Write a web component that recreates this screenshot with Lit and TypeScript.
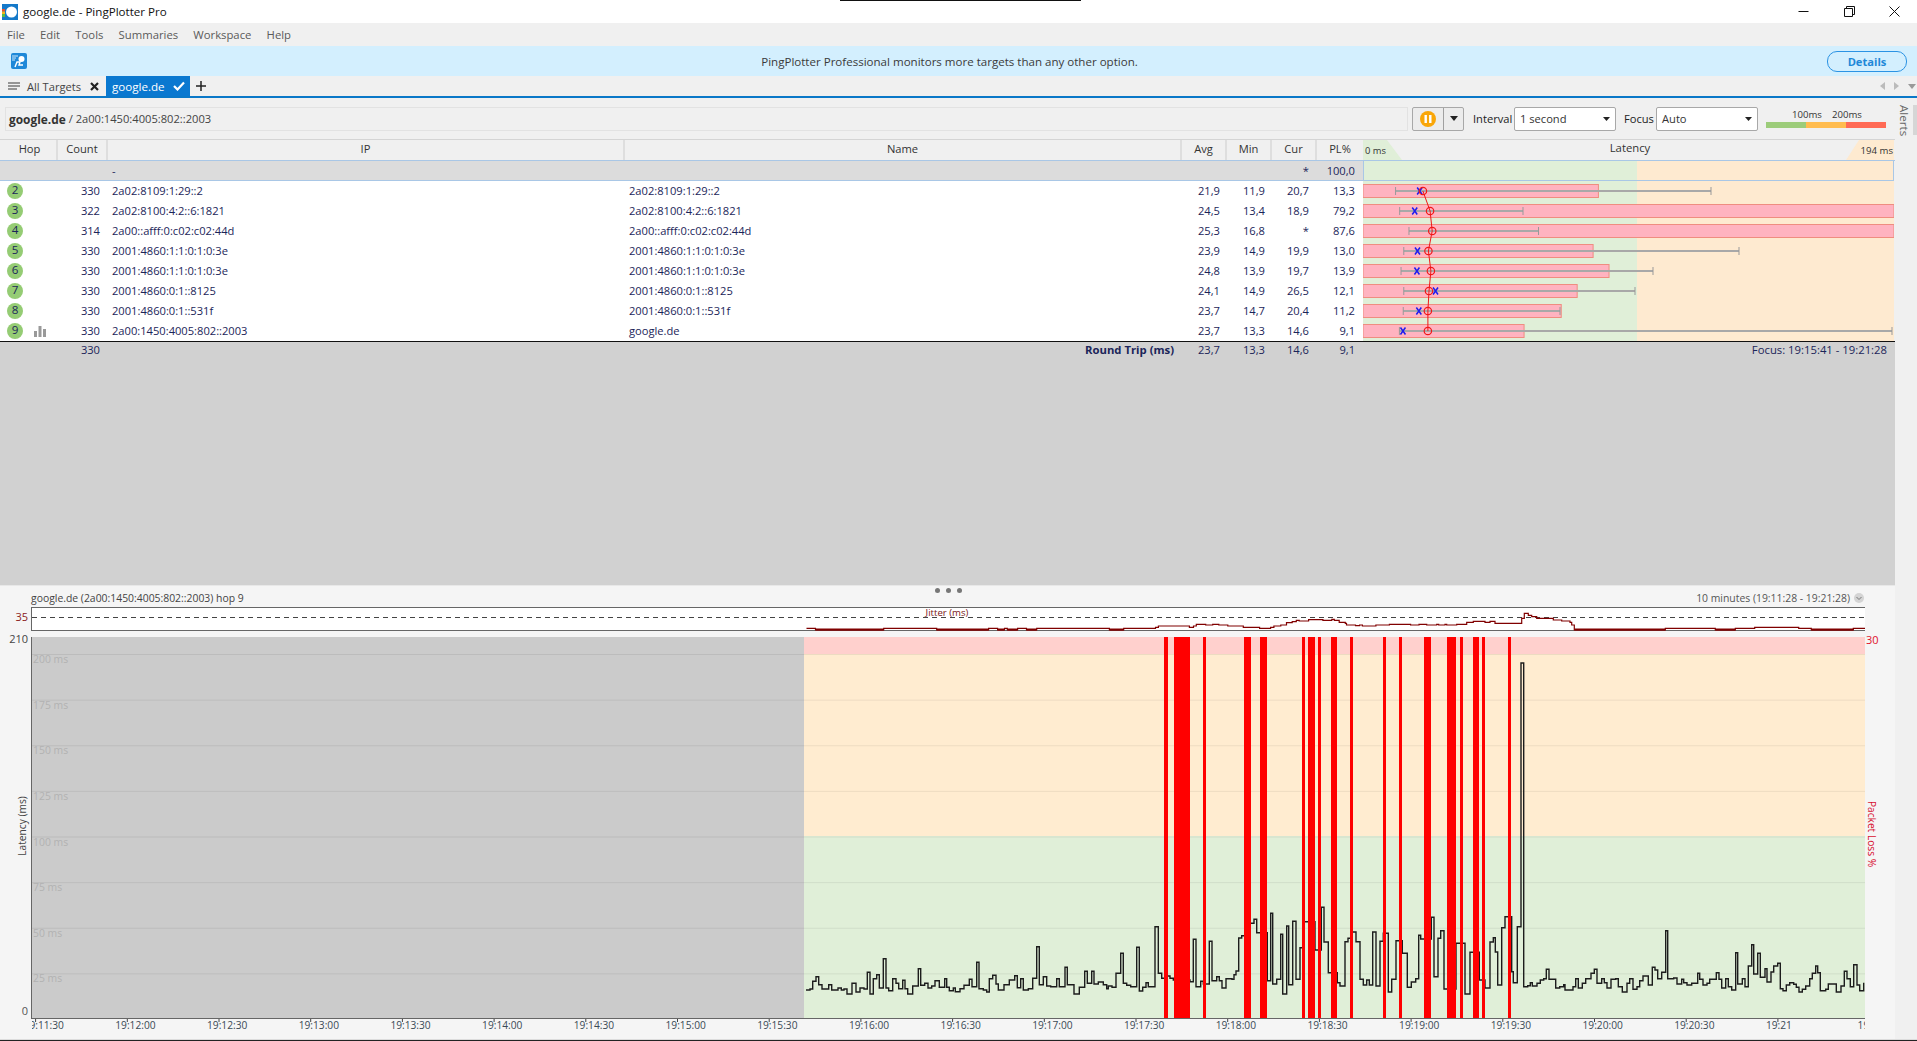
import { LitElement, html, css, svg } from "lit";
import { customElement } from "lit/decorators.js";

type Pt = [number, number];
const K = 531 / 194;
const X = (ms: number) => 1363 + ms * K;

const ROWS = [
  { hop: 2, count: 330, ip: "2a02:8109:1:29::2", name: "2a02:8109:1:29::2", avg: 21.9, min: 11.9, cur: 20.7, pl: 13.3, maxX: 1711 },
  { hop: 3, count: 322, ip: "2a02:8100:4:2::6:1821", name: "2a02:8100:4:2::6:1821", avg: 24.5, min: 13.4, cur: 18.9, pl: 79.2, maxX: 1523 },
  { hop: 4, count: 314, ip: "2a00::afff:0:c02:c02:44d", name: "2a00::afff:0:c02:c02:44d", avg: 25.3, min: 16.8, cur: null, pl: 87.6, maxX: 1538.5 },
  { hop: 5, count: 330, ip: "2001:4860:1:1:0:1:0:3e", name: "2001:4860:1:1:0:1:0:3e", avg: 23.9, min: 14.9, cur: 19.9, pl: 13.0, maxX: 1739 },
  { hop: 6, count: 330, ip: "2001:4860:1:1:0:1:0:3e", name: "2001:4860:1:1:0:1:0:3e", avg: 24.8, min: 13.9, cur: 19.7, pl: 13.9, maxX: 1653 },
  { hop: 7, count: 330, ip: "2001:4860:0:1::8125", name: "2001:4860:0:1::8125", avg: 24.1, min: 14.9, cur: 26.5, pl: 12.1, maxX: 1635 },
  { hop: 8, count: 330, ip: "2001:4860:0:1::531f", name: "2001:4860:0:1::531f", avg: 23.7, min: 14.7, cur: 20.4, pl: 11.2, maxX: 1560 },
  { hop: 9, count: 330, ip: "2a00:1450:4005:802::2003", name: "google.de", avg: 23.7, min: 13.3, cur: 14.6, pl: 9.1, maxX: 1892 },
];
const f1 = (n: number) => n.toFixed(1).replace(".", ",");

const L8: Pt[] = [[78,300],[90,297],[98,274],[108,260],[116,284],[126,297],[136,297],[146,284],[155,300],[174,294],[184,300],[192,297],[201,312],[216,280],[228,306],[240,294],[252,297],[262,247],[270,312],[280,266],[290,254],[298,294],[310,206],[318,294],[326,302],[338,266],[348,280],[356,296],[368,271],[375,296],[383,312],[398,288],[415,236],[422,286],[434,280],[444,294],[455,288],[465,272],[478,292],[494,266],[500,292],[508,302],[520,294],[526,305],[540,296],[552,286],[568,268],[576,290],[590,217],[597,296],[610,300],[620,306],[628,266],[638,256],[648,282],[655,300],[672,284],[688,270],[704,257],[712,293],[722,266],[730,300],[745,296],[758,265],[770,170],[778,284],[790,260],[800,288],[812,290],[830,266],[838,290],[855,232],[862,284],[882,312],[898,292],[914,244],[922,280],[935,244],[942,282],[955,276],[970,284],[980,296],[985,288],[996,292],[1008,250],[1022,190],[1030,280],[1040,286],[1052,290],[1070,172],[1078,303],[1088,292],[1098,278],[1105,290],[1125,110],[1135,250],[1145,265],[1158,258]];
const L9: Pt[] = [[44,258],[60,265],[70,270],[120,275],[130,148],[138,290],[152,274],[160,282],[178,154],[186,272],[200,260],[208,272],[216,294],[228,266],[246,268],[252,254],[258,243],[266,144],[275,137],[290,100],[312,88],[320,128],[352,272],[362,70],[368,282],[380,268],[392,133],[398,312],[410,108],[416,284],[428,94],[438,268],[450,173],[462,95],[495,180],[514,52],[522,156],[535,248],[562,278],[570,288],[585,155],[594,145],[604,126],[618,155],[630,268],[640,285],[650,270],[658,285],[668,126],[678,288],[690,154],[700,130],[715,306],[725,268],[738,152],[757,190],[772,292],[784,276],[797,266],[806,136],[812,147],[844,82],[852,260],[864,145],[872,122],[882,297],[918,160],[945,312],[960,187],[988,270],[1005,294],[1020,156],[1030,143],[1036,186],[1043,285],[1055,113],[1065,80],[1085,245],[1090,278],[1102,110],[1113,-681]];
const L10: Pt[] = [[20,290],[32,287],[40,278],[46,288],[60,280],[70,270],[80,266],[88,238],[96,268],[116,294],[128,290],[140,284],[144,300],[168,290],[176,266],[184,294],[196,280],[206,266],[222,250],[232,238],[240,280],[254,266],[262,278],[270,294],[282,268],[296,266],[304,290],[316,306],[330,280],[338,266],[348,298],[360,290],[368,272],[378,258],[394,285],[406,232],[414,240],[422,266],[434,247],[446,122],[452,266],[470,264],[480,282],[494,268],[500,278],[510,285],[524,280],[542,250],[548,268],[558,285],[570,280],[578,268],[598,248],[606,268],[614,294],[626,266],[634,290],[644,300],[656,188],[662,282],[676,266],[684,290],[694,228],[704,164],[710,252],[722,190],[730,262],[744,236],[750,276],[762,246],[770,228],[782,220],[790,296],[798,302],[808,285],[818,278],[830,283],[838,292],[846,306],[856,298],[866,288],[878,266],[886,250],[896,228],[902,248],[910,302],[926,298],[934,282],[958,306],[972,288],[982,244],[990,266],[1000,290],[1010,224],[1020,285],[1028,302],[1040,278]];

const latencyPts: Pt[] = [
  ...L8.map(([x, y]): Pt => [780 + x / 3, 890 + y / 3]),
  ...L9.map(([x, y]): Pt => [1150 + x / 3, 890 + y / 3]),
  ...L10.map(([x, y]): Pt => [1517 + x / 3, 890 + y / 3]),
];

const J6: Pt[] = [[65,115],[87,120],[254,115],[384,120],[511,115],[533,120],[550,115],[557,120],[582,115],[604,120],[629,115],[807,120],[842,115],[920,112],[927,108],[1003,112],[1013,108],[1020,103],[1043,105],[1060,103],[1075,105],[1097,108],[1135,112],[1175,115],[1202,112],[1210,108],[1227,105],[1241,98],[1255,95],[1265,91],[1272,93],[1288,93],[1295,89],[1330,91],[1352,88],[1358,91],[1370,97],[1385,100],[1388,105],[1410,107],[1420,105],[1427,108],[1460,105],[1493,103],[1545,105]];
const J7: Pt[] = [[33,105],[57,103],[80,105],[110,103],[116,105],[135,103],[140,105],[170,103],[200,97],[220,94],[250,94],[255,97],[270,94],[285,100],[340,100],[365,85],[373,70],[385,76],[395,80],[410,85],[440,85],[460,90],[485,93],[510,97],[515,105],[523,120],[796,115],[946,120],[1006,115],[1064,112],[1196,115],[1234,120],[1360,115],[1395,115]];
const jitterPts: Pt[] = [
  ...J6.map(([x, y]): Pt => [780 + x / 2.45, 590 + y / 3]),
  ...J7.map(([x, y]): Pt => [1400 + x / 3, 590 + y / 3]),
];

const stepPath = (p: Pt[]) => {
  let d = `M${p[0][0].toFixed(1)} ${p[0][1].toFixed(1)}`;
  for (let i = 1; i < p.length; i++) d += `H${p[i][0].toFixed(1)}V${p[i][1].toFixed(1)}`;
  return d;
};

const RED: [number, number][] = [[1164,1168],[1174,1190],[1203,1206],[1244,1251],[1260,1267],[1302,1305],[1308,1315],[1318,1321],[1331,1337],[1350,1353],[1383,1386],[1399,1402],[1424,1431],[1447,1456],[1460,1463],[1473,1479],[1482,1485],[1508,1511]];
const TIMES = ["19:11:30","19:12:00","19:12:30","19:13:00","19:13:30","19:14:00","19:14:30","19:15:00","19:15:30","19:16:00","19:16:30","19:17:00","19:17:30","19:18:00","19:18:30","19:19:00","19:19:30","19:20:00","19:20:30","19:21","19:21:30"];
const GRID = [200, 175, 150, 125, 100, 75, 50, 25];
const gy = (ms: number) => 1019 - ms * 1.825;

@customElement("app-root")
export class AppRoot extends LitElement {
  static styles = css`
    :host { display: block; width: 1917px; height: 1041px; overflow: hidden; position: relative; background: #f0f0f0; font-family: "Open Sans", "Noto Sans", sans-serif; font-size: 11.15px; color: #333; }
    * { box-sizing: border-box; }
    svg { display: block; }
    svg text { font-family: "Open Sans", "Noto Sans", sans-serif; }
    .page { display: flex; flex-direction: column; height: 1041px; }
    .topline { position: absolute; left: 840px; top: 0; width: 241px; height: 1px; background: #111; }
    .title { height: 23px; background: #fff; display: flex; align-items: center; padding-left: 2px; color: #111; font-size: 11.6px; flex: none; }
    .title .txt { margin-left: 5px; }
    .winbtns { margin-left: auto; display: flex; gap: 34.5px; padding-right: 17px; }
    .menu { height: 23px; flex: none; display: flex; align-items: center; padding-left: 7px; gap: 15.2px; color: #5a5a5a; font-size: 11.3px; }
    .banner { height: 30px; flex: none; background: #d3effe; display: flex; align-items: center; padding: 0 10px 0 11px; }
    .banner .msg { flex: 1; text-align: center; color: #3a3a3a; padding-left: 45px; font-size: 11.55px; }
    .details { width: 80px; height: 21px; border: 1.5px solid #2b93e4; border-radius: 10px; display: flex; align-items: center; justify-content: center; font-weight: 700; color: #1e88d8; }
    .tabs { height: 20px; flex: none; display: flex; align-items: center; padding-left: 8px; }
    .tabs .all { margin-left: 7px; color: #444; width: 63px; }
    .tab { margin-left: 7px; width: 84px; height: 20px; background: #0a78d0; color: #fff; display: flex; align-items: center; padding-left: 6px; gap: 7px; font-size: 11.6px; }
    .tab span { width: 54px; }
    .plus { margin-left: 6px; }
    .navs { margin-left: auto; display: flex; gap: 9px; align-items: center; padding-right: 1px; }
    .blue { height: 2px; flex: none; background: #0a78c8; }
    .body { flex: 1; display: flex; min-height: 0; }
    .foot { height: 2px; flex: none; background: #dcdcdc; border-bottom: 1px solid #222; }
    .main { width: 1895px; flex: none; display: flex; flex-direction: column; }
    .alerts { flex: 1; display: flex; padding-top: 7px; padding-left: 2px; }
    .alerts .lbl { writing-mode: vertical-rl; color: #666; height: 30px; line-height: 15px; font-size: 11.6px; }
    .alerts .thumb { width: 4px; height: 30px; background: #d6d6d6; margin-left: auto; }
    .toolbar { height: 42px; flex: none; display: flex; align-items: center; padding-left: 5px; color: #222; border-bottom: 1px solid #d4d4d4; }
    .crumb { width: 1403px; height: 24px; border: 1px solid #e2e2e2; display: flex; align-items: center; padding-left: 3px; color: #444; white-space: pre; }
    .crumb b { color: #333; font-size: 11.9px; }
    .pause { margin-left: 4px; width: 52px; height: 24px; border: 1px solid #a8a8a8; border-radius: 2px; display: flex; background: #ececec; }
    .pause .p1 { width: 31px; display: flex; align-items: center; justify-content: center; border-right: 1px solid #a0a0a0; }
    .pause .p2 { flex: 1; display: flex; align-items: center; justify-content: center; }
    .lab { margin-left: 9px; width: 41px; }
    .lab.f { margin-left: 8px; width: 32px; }
    .sel { width: 102px; height: 24px; background: #fff; border: 1px solid #a8a8a8; border-radius: 2px; display: flex; align-items: center; justify-content: space-between; padding: 0 5px; color: #333; }
    .legend { margin-left: 8px; width: 121px; display: flex; flex-direction: column; }
    .legend .nums { display: flex; font-size: 9.6px; padding-left: 26px; gap: 10px; line-height: 12px; color: #333; }
    .legend .bar { display: flex; height: 6px; margin-top: 1px; }
    .legend .bar i { display: block; }
    .g1 { width: 40px; background: #9ccc7a; } .g2 { width: 40px; background: #ffbc4f; } .g3 { width: 40px; background: #ff6a55; }
    .cols { display: grid; grid-template-columns: 58px 50px 517px 557px 45px 45px 45px 46px; }
    .head { height: 21px; flex: none; display: flex; border-bottom: 1px solid #a9c7e6; }
    .head .cols { width: 1363px; }
    .head .cols div { text-align: center; line-height: 17px; color: #333; border-right: 2px solid #dedede; }
    .head .cols div:first-child { padding-left: 3px; }
    .head .cols div:last-child { border-right: 0; }
    .tbl { display: flex; flex: none; }
    .rowsbox { width: 1363px; }
    .r { height: 20px; line-height: 19px; background: #fff; color: #1b2559; white-space: nowrap; }
    .r.none { background: #dcdcdc; box-shadow: inset 0 -1px 0 #a9c7e6; }
    .r > div { padding: 0 8px 0 4px; overflow: hidden; }
    .hopc { display: flex; align-items: center; gap: 11px; padding-left: 7px !important; }
    .dot { width: 16px; height: 16px; border-radius: 50%; background: #95cc74; text-align: center; line-height: 14px; color: #1b2559; flex: none; font-size: 11.6px; }
    .num { text-align: right; }
    .n7 { padding-right: 7px !important; }
    .sum { flex: 1; background: #d1d1d1; border-top: 1.5px solid #111; min-height: 0; }
    .sum .r { background: transparent; height: 18px; line-height: 15px; }
    .sum .cols { width: 1894px; grid-template-columns: 58px 50px 517px 557px 45px 45px 45px 46px 531px; }
    .rt { font-weight: 700; text-align: right; padding-right: 8px !important; font-size: 11.3px; }
    .focus { text-align: right; padding-right: 7px !important; font-size: 11.3px; }
    .panel { height: 454px; flex: none; background: #f5f5f5; position: relative; border-top: 1px solid #e8e8e8; }
    .dots { position: absolute; left: 935px; top: 2px; display: flex; gap: 6px; }
    .dots i { width: 5px; height: 5px; border-radius: 50%; background: #777; display: block; }
    .phead { height: 21px; display: flex; align-items: center; padding: 3px 31px 0 31px; color: #444; font-size: 10.4px; }
    .phead .rng { margin-left: auto; color: #555; }
    .chev { margin-left: 4px; }
  `;

  private rowCols(r: (typeof ROWS)[number]) {
    return html`<div class="cols r">
      <div class="hopc"><span class="dot">${r.hop}</span>${r.hop === 9
        ? html`<svg width="12" height="11" viewBox="0 0 12 11"><path d="M0 5h3v6H0zM4.5 0h3v11h-3zM9 3h3v8H9z" fill="#999"/></svg>`
        : ""}</div>
      <div class="num">${r.count}</div>
      <div>${r.ip}</div>
      <div>${r.name}</div>
      <div class="num n7">${f1(r.avg)}</div>
      <div class="num n7">${f1(r.min)}</div>
      <div class="num">${r.cur === null ? "*" : f1(r.cur)}</div>
      <div class="num">${f1(r.pl)}</div>
    </div>`;
  }

  private latencyBars() {
    const rowY = (i: number) => 191 + i * 20;
    const avgLine = ROWS.map((r, i) => `${X(r.avg).toFixed(1)},${rowY(i)}`).join(" ");
    return html`<svg width="531" height="180" viewBox="1363 161 531 180">
      <rect x="1363" y="161" width="274" height="180" fill="#e0efd8"/>
      <rect x="1637" y="161" width="257" height="180" fill="#feead0"/>
      <rect x="1363.5" y="160.5" width="530" height="20" fill="none" stroke="#a9c7e6"/>
      ${ROWS.map((r, i) => {
        const y = rowY(i);
        const w = Math.min(531, (r.pl / 30) * 531);
        return svg`
          <rect x="1363" y=${y - 6.5} width=${w} height="13" fill="#ffb3c0" stroke="#ef8d80" stroke-width="1"/>
          <line x1=${X(r.min)} x2=${r.maxX} y1=${y} y2=${y} stroke="#a8a8a8" stroke-width="2"/>
          <line x1=${X(r.min)} x2=${X(r.min)} y1=${y - 4} y2=${y + 4} stroke="#999" stroke-width="1"/>
          <line x1=${r.maxX} x2=${r.maxX} y1=${y - 4} y2=${y + 4} stroke="#999" stroke-width="1"/>`;
      })}
      <polyline points=${avgLine} fill="none" stroke="#f01818" stroke-width="1"/>
      ${ROWS.map((r, i) => {
        const y = rowY(i);
        const cx = r.cur === null ? null : X(r.cur);
        return svg`
          ${cx === null ? "" : svg`<path d="M${cx - 2.5} ${y - 3.5}L${cx + 2.5} ${y + 3.5}M${cx + 2.5} ${y - 3.5}L${cx - 2.5} ${y + 3.5}" stroke="#1c1cf0" stroke-width="1.5" fill="none"/>`}
          <circle cx=${X(r.avg)} cy=${y} r="3.7" fill="none" stroke="#f01818" stroke-width="1.2"/>`;
      })}
    </svg>`;
  }

  private chart() {
    return html`<svg width="1895" height="432" viewBox="0 607 1895 432">
      <defs>
        <clipPath id="xc"><rect x="32" y="1019" width="1833" height="20"/></clipPath>
        <clipPath id="pc"><rect x="32" y="637" width="1833" height="381"/></clipPath>
      </defs>
      <rect x="32" y="607" width="1833" height="24" fill="#fff"/>
      <line x1="32" x2="1865" y1="607.5" y2="607.5" stroke="#666"/>
      <line x1="32" x2="1865" y1="630.5" y2="630.5" stroke="#666"/>
      <line x1="31.5" x2="31.5" y1="607" y2="631" stroke="#666"/>
      <line x1="32" x2="1865" y1="617.5" y2="617.5" stroke="#444" stroke-dasharray="5 4"/>
      <text x="28" y="621" text-anchor="end" font-size="11" fill="#8b1a1a">35</text>
      <text x="947" y="615.5" text-anchor="middle" font-size="9.6" fill="#7a1515">Jitter (ms)</text>
      <path d=${stepPath(jitterPts)} fill="none" stroke="#800000" stroke-width="1.2"/>
      ${jitterPts.map((p, i) =>
        p[1] >= 629.9 && jitterPts[i + 1]
          ? svg`<line x1=${p[0]} x2=${jitterPts[i + 1][0]} y1=${p[1] - 0.5} y2=${p[1] - 0.5} stroke="#800000" stroke-width="2"/>`
          : "")}

      <rect x="32" y="637" width="772" height="381" fill="#cbcbcb"/>
      <rect x="804" y="637" width="1061" height="17" fill="#ffd0cd"/>
      <rect x="804" y="654" width="1061" height="182" fill="#ffecd0"/>
      <rect x="804" y="836" width="1061" height="182" fill="#e0efd8"/>
      ${GRID.map((ms) => svg`
        <line x1="32" x2="1865" y1=${gy(ms) + 0.5} y2=${gy(ms) + 0.5} stroke="#000" stroke-opacity="0.07"/>
        <text x="33" y=${gy(ms) + 9} font-size="10.4" fill="#b2b2b2">${ms} ms</text>`)}
      <g clip-path="url(#pc)">
        <path d=${stepPath(latencyPts)} fill="none" stroke="#1c1c1c" stroke-width="1.4"/>
        ${RED.map(([a, b]) => svg`<rect x=${a} y="637" width=${b - a} height="381" fill="#ff0000"/>`)}
      </g>
      <line x1="31.5" x2="31.5" y1="637" y2="1019" stroke="#666"/>
      <line x1="32" x2="1865" y1="1018.5" y2="1018.5" stroke="#666"/>
      <text x="28" y="643" text-anchor="end" font-size="11" fill="#444">210</text>
      <text x="28" y="1015" text-anchor="end" font-size="11" fill="#555">0</text>
      <text x="1866" y="644" font-size="11" fill="#e0102a">30</text>
      <text transform="translate(26 826) rotate(-90)" text-anchor="middle" font-size="10.2" fill="#444">Latency (ms)</text>
      <text transform="translate(1868 834) rotate(90)" text-anchor="middle" font-size="10.2" fill="#d81030">Packet Loss %</text>
      <g clip-path="url(#xc)">
        ${TIMES.map((t, i) => {
          const tx = 35.6 + i * 91.7;
          return svg`<line x1=${tx} x2=${tx} y1="1019" y2="1022" stroke="#444"/>
          <text x=${tx - 12} y="1029" font-size="10.2" fill="#3a4a55">${t}</text>`;
        })}
      </g>
    </svg>`;
  }

  render() {
    return html`<div class="page">
      <div class="title">
        <svg width="16" height="16" viewBox="0 0 16 16">
          <rect width="16" height="16" fill="#1479c9"/>
          <circle cx="9.5" cy="8" r="5.5" fill="#fff"/>
          <rect y="5" width="3" height="2.5" fill="#e8502a"/><rect y="7.5" width="3" height="2.5" fill="#f5b21a"/><rect y="10" width="3" height="3" fill="#58b947"/>
        </svg>
        <span class="txt">google.de - PingPlotter Pro</span>
        <div class="winbtns">
          <svg width="11" height="11" viewBox="0 0 11 11"><path d="M0.5 5.5h10" stroke="#111" fill="none"/></svg>
          <svg width="11" height="11" viewBox="0 0 11 11"><path d="M0.5 2.5h8v8h-8zM2.5 2.5v-2h8v8h-2" stroke="#111" fill="none"/></svg>
          <svg width="11" height="11" viewBox="0 0 11 11"><path d="M0.5 0.5l10 10M10.5 0.5l-10 10" stroke="#111" fill="none"/></svg>
        </div>
      </div>
      <div class="menu"><span>File</span><span>Edit</span><span>Tools</span><span>Summaries</span><span>Workspace</span><span>Help</span></div>
      <div class="banner">
        <svg width="16" height="16" viewBox="0 0 16 16">
          <rect width="16" height="16" rx="2" fill="#1e88d8"/>
          <circle cx="10.5" cy="6" r="3" fill="#fff"/>
          <path d="M1 3h6M1 5h4M1 7h3" stroke="#cfe9fb" stroke-width="1"/>
          <path d="M4 14l2-5h3l-1 3h4" stroke="#fff" stroke-width="1.4" fill="none"/>
        </svg>
        <div class="msg">PingPlotter Professional monitors more targets than any other option.</div>
        <div class="details">Details</div>
      </div>
      <div class="tabs">
        <svg width="12" height="8" viewBox="0 0 12 8"><path d="M0 1h12M0 4h12M0 7h9" stroke="#777" stroke-width="1.3"/></svg>
        <span class="all">All Targets</span>
        <svg width="9" height="9" viewBox="0 0 9 9"><path d="M1 1l7 7M8 1l-7 7" stroke="#222" stroke-width="2.2"/></svg>
        <div class="tab"><span>google.de</span>
          <svg width="12" height="10" viewBox="0 0 12 10"><path d="M1 5l3.5 3.5L11 1.5" stroke="#fff" stroke-width="2.2" fill="none"/></svg>
        </div>
        <svg class="plus" width="10" height="10" viewBox="0 0 10 10"><path d="M5 0v10M0 5h10" stroke="#222" stroke-width="1.5"/></svg>
        <div class="navs">
          <svg width="5" height="8" viewBox="0 0 5 8"><path d="M5 0v8L0 4z" fill="#bbb"/></svg>
          <svg width="5" height="8" viewBox="0 0 5 8"><path d="M0 0v8l5-4z" fill="#bbb"/></svg>
          <svg width="8" height="5" viewBox="0 0 8 5"><path d="M0 0h8L4 5z" fill="#999"/></svg>
        </div>
      </div>
      <div class="blue"></div>
      <div class="body">
        <div class="main">
          <div class="toolbar">
            <div class="crumb"><b>google.de</b> / 2a00:1450:4005:802::2003</div>
            <div class="pause">
              <div class="p1"><svg width="16" height="16" viewBox="0 0 16 16"><circle cx="8" cy="8" r="8" fill="#f9a608"/><path d="M4.5 4h2.4v8H4.5zM9.1 4h2.4v8H9.1z" fill="#fff"/></svg></div>
              <div class="p2"><svg width="8" height="5" viewBox="0 0 8 5"><path d="M0 0h8L4 5z" fill="#222"/></svg></div>
            </div>
            <span class="lab">Interval</span>
            <div class="sel"><span>1 second</span><svg width="7" height="4" viewBox="0 0 7 4"><path d="M0 0h7L3.5 4z" fill="#222"/></svg></div>
            <span class="lab f">Focus</span>
            <div class="sel"><span>Auto</span><svg width="7" height="4" viewBox="0 0 7 4"><path d="M0 0h7L3.5 4z" fill="#222"/></svg></div>
            <div class="legend">
              <div class="nums"><span>100ms</span><span>200ms</span></div>
              <div class="bar"><i class="g1"></i><i class="g2"></i><i class="g3"></i></div>
            </div>
          </div>
          <div class="head">
            <div class="cols"><div>Hop</div><div>Count</div><div>IP</div><div>Name</div><div>Avg</div><div>Min</div><div>Cur</div><div>PL%</div></div>
            <svg width="531" height="20" viewBox="1363 140 531 20">
              <path d="M1363 140h24l15 20h-39z" fill="#e0efd8"/>
              <path d="M1859 140h35v20h-48z" fill="#feead0"/>
              <text x="1365" y="154" font-size="9.4" fill="#333">0 ms</text>
              <text x="1893" y="154" text-anchor="end" font-size="9.6" fill="#333">194 ms</text>
              <text x="1630" y="152" text-anchor="middle" font-size="11.3" fill="#333">Latency</text>
            </svg>
          </div>
          <div class="tbl">
            <div class="rowsbox">
              <div class="cols r none"><div></div><div></div><div>-</div><div></div><div></div><div></div><div class="num">*</div><div class="num">100,0</div></div>
              ${ROWS.map((r) => this.rowCols(r))}
            </div>
            ${this.latencyBars()}
          </div>
          <div class="sum">
            <div class="cols r">
              <div></div><div class="num">330</div><div></div><div class="rt">Round Trip (ms)</div>
              <div class="num n7">23,7</div><div class="num n7">13,3</div><div class="num">14,6</div><div class="num">9,1</div>
              <div class="focus">Focus: 19:15:41 - 19:21:28</div>
            </div>
          </div>
          <div class="panel">
            <div class="dots"><i></i><i></i><i></i></div>
            <div class="phead">
              <span>google.de (2a00:1450:4005:802::2003) hop 9</span>
              <span class="rng">10 minutes (19:11:28 - 19:21:28)</span>
              <svg class="chev" width="10" height="10" viewBox="0 0 10 10"><circle cx="5" cy="5" r="5" fill="#d4d4d4"/><path d="M2.5 4l2.5 2.5L7.5 4" stroke="#777" fill="none"/></svg>
            </div>
            ${this.chart()}
          </div>
        </div>
        <div class="alerts"><span class="lbl">Alerts</span><span class="thumb"></span></div>
      </div>
      <div class="foot"></div>
    </div>
    <div class="topline"></div>`;
  }
}
